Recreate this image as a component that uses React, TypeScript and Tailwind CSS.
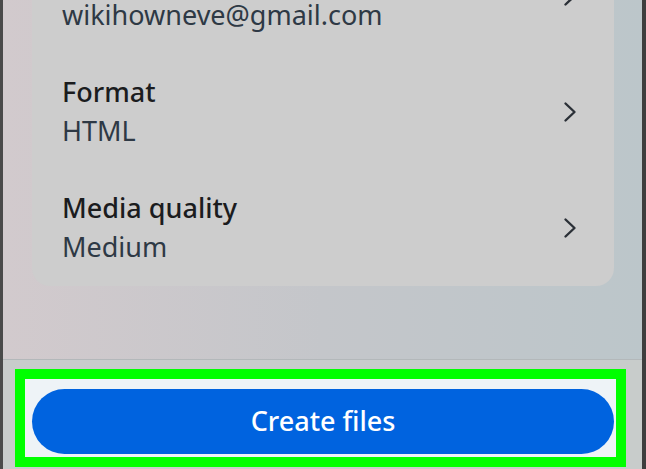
import React from "react";

const Chevron = () => (
  <svg width="16" height="22" viewBox="0 0 16 22" fill="none" className="shrink-0">
    <path d="M3.5 2.5 L12.5 11 L3.5 19.5" stroke="#2b3037" strokeWidth="2.4" strokeLinecap="round" strokeLinejoin="round" />
  </svg>
);

const Row = ({ title, value }: { title: string; value: string }) => (
  <div className="h-[116px] flex items-center justify-between pl-[30px] pr-[36px]">
    <div className="flex flex-col">
      <span className="text-[27px] leading-[37px] font-medium text-[#1b1c1e]">{title}</span>
      <span className="text-[27px] leading-[41px] text-[#2e3945]">{value}</span>
    </div>
    <Chevron />
  </div>
);

export default function App() {
  return (
    <div
      className="w-[646px] h-[469px] overflow-hidden flex flex-col border-l-[3px] border-l-[#4a4a4a] border-r-[4px] border-r-[#3e3e3e] bg-gradient-to-r from-[#d2cacd] via-[#c4c6ca] to-[#bcc6ca]"
      style={{ fontFamily: '"Noto Sans", "Open Sans", sans-serif' }}
    >
      <div className="h-[359px] shrink-0 pl-[29px] pr-[28px]">
        <div className="mt-[-62px] bg-[#cdcdcd] rounded-b-[18px] rounded-t-[18px] flex flex-col">
          <Row title="Account" value="wikihowneve@gmail.com" />
          <Row title="Format" value="HTML" />
          <Row title="Media quality" value="Medium" />
        </div>
      </div>
      <div className="relative flex-1 border-t border-t-[#b3b8ba] bg-[#c8cccb] pt-[29px] pl-[29px] pr-[28px]">
        <div className="absolute left-[12px] top-[9px] w-[611px] h-[98px] border-[10px] border-[#00ff00] bg-[#eef3f7]" />
        <button className="relative w-full h-[65px] rounded-full bg-[#0063df] text-white text-[27px] font-medium">
          Create files
        </button>
      </div>
    </div>
  );
}
